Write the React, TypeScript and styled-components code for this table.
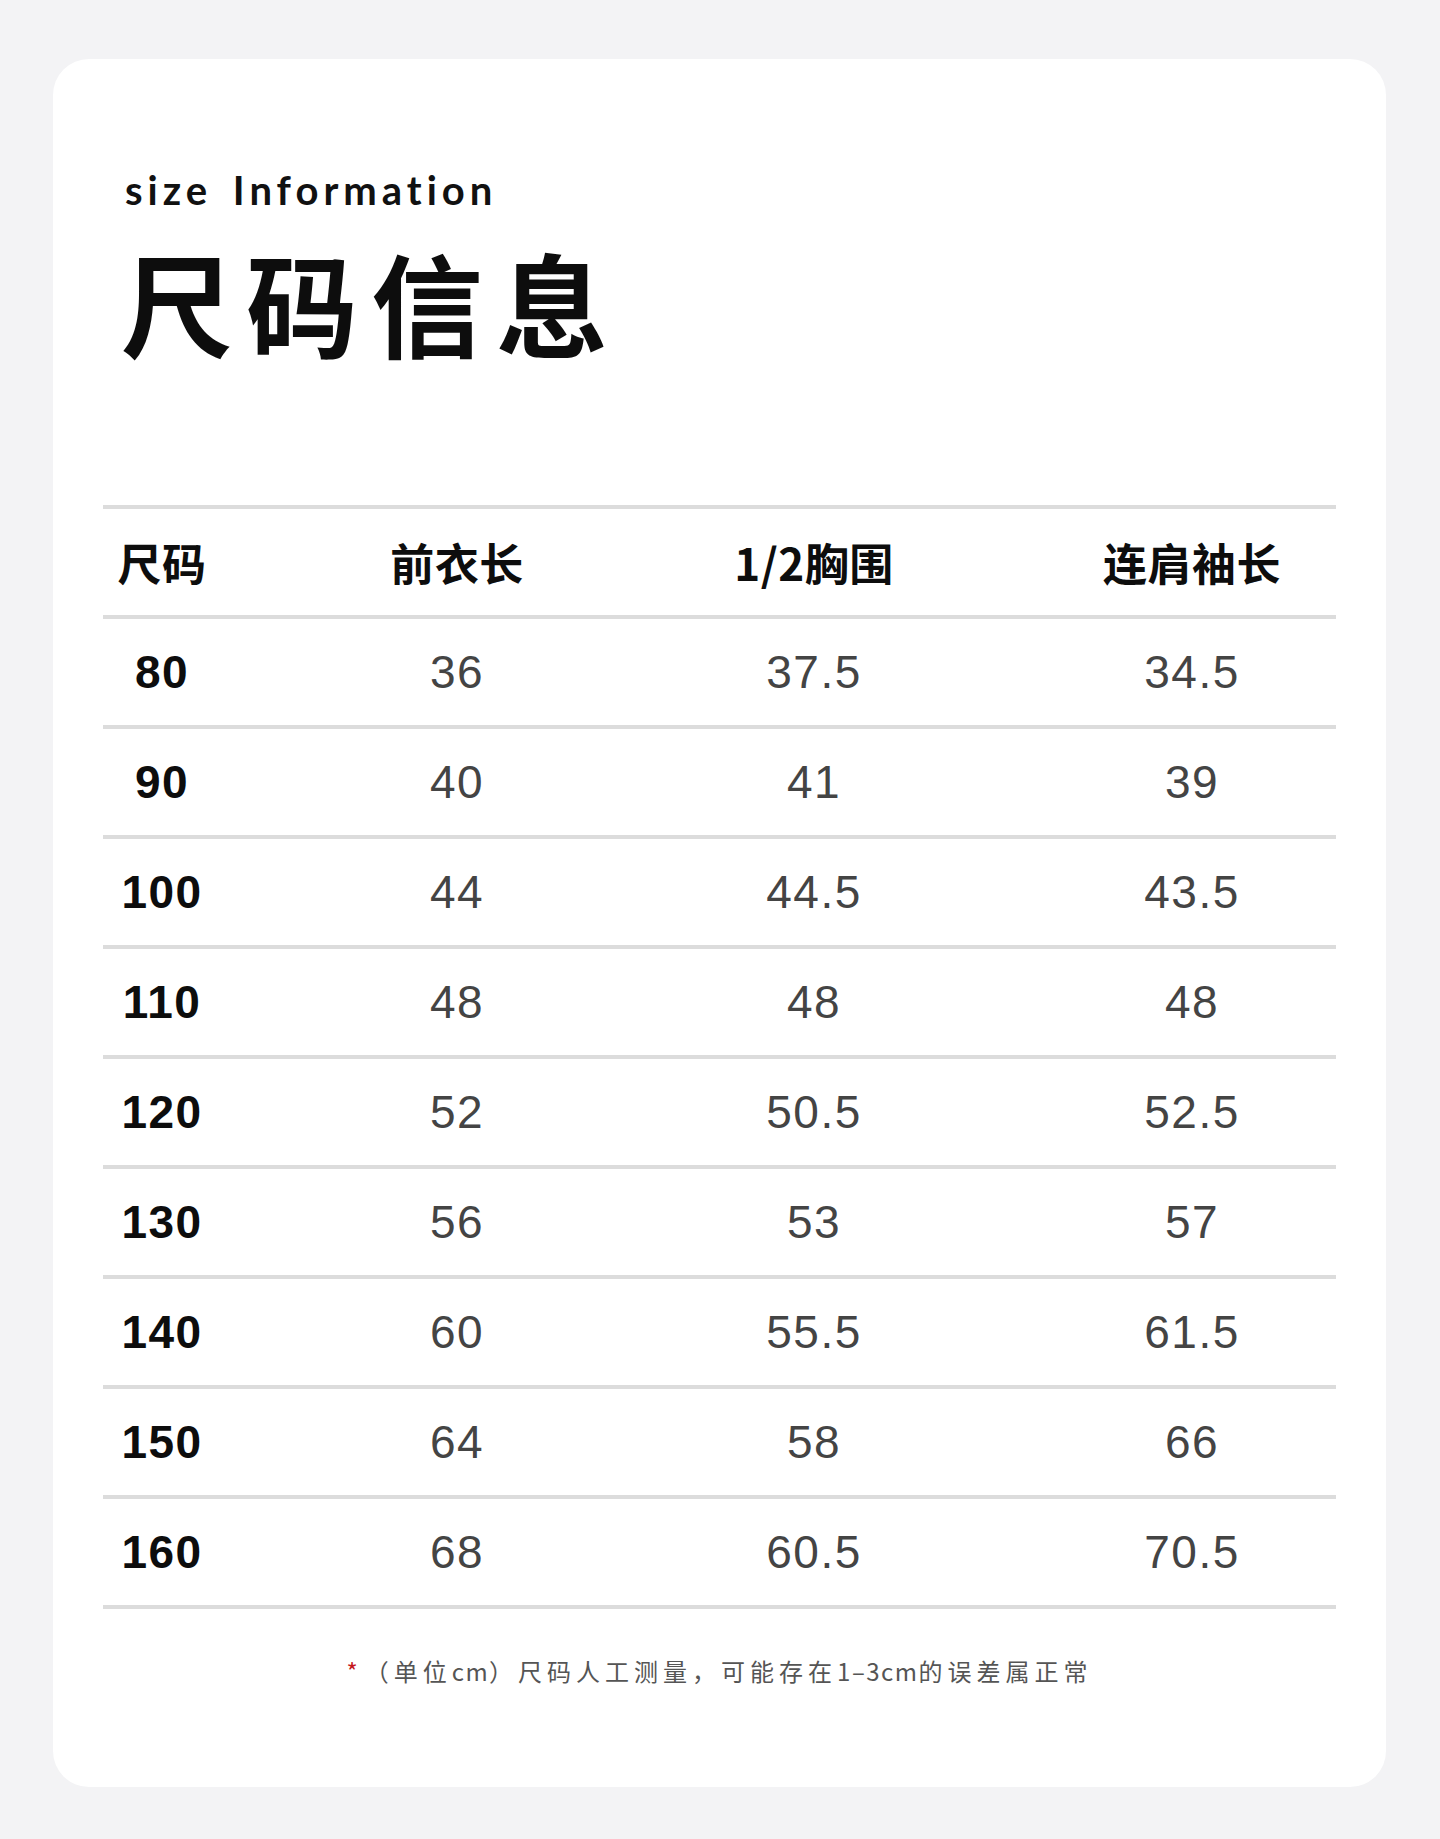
import React from 'react'
import styled, { createGlobalStyle } from 'styled-components'

const GlobalStyle = createGlobalStyle`
    html, body {
        margin: 0;
        padding: 0;
        background: #f3f3f5;
    }
`

const Page = styled.div`
    width: 1440px;
    height: 1839px;
    box-sizing: border-box;
    padding: 59px 54px 52px 53px;
    background: #f3f3f5;
`

const Card = styled.div`
    height: 1728px;
    box-sizing: border-box;
    background: #ffffff;
    border-radius: 36px;
    padding: 111px 50px 0 50px;
    display: flex;
    flex-direction: column;
`

const Heading = styled.div`
    padding-left: 22px;
    display: flex;
    flex-direction: column;

    .subtitle {
        margin: 0;
        font-family: 'Lato', 'Open Sans', sans-serif;
        font-size: 40px;
        font-weight: 700;
        line-height: 1;
        letter-spacing: 5px;
        word-spacing: 6px;
        color: #111;
    }

    .title {
        margin: 35px 0 0 -4px;
        font-family: 'Noto Sans CJK SC', sans-serif;
        font-size: 112px;
        font-weight: 700;
        line-height: 1;
        letter-spacing: 13px;
        color: #0d0d0d;
    }
`

const Table = styled.div`
    margin-top: 148px;
    border-top: 4px solid #dcdcdc;
`

const Row = styled.div`
    display: grid;
    grid-template-columns: 118px 472px 242px 401px;
    align-items: center;
    height: 106px;
    border-bottom: 4px solid #dcdcdc;
`

const Cell = styled.div<{ $head?: boolean; $size?: boolean; $last?: boolean }>`
    text-align: center;
    padding-left: ${({ $last }) => ($last ? '113px' : '0')};
    white-space: nowrap;
    line-height: 1;
    font-family: ${({ $head }) =>
        $head ? "'Noto Sans CJK SC', sans-serif" : "'Liberation Sans', Arial, sans-serif"};
    font-size: ${({ $head }) => ($head ? '44px' : '46px')};
    font-weight: ${({ $head, $size }) => ($head || $size ? 700 : 400)};
    letter-spacing: ${({ $head }) => ($head ? '0.5px' : '1.5px')};
    color: ${({ $head, $size }) => ($head || $size ? '#0d0d0d' : '#444444')};
`

const Note = styled.p`
    margin: 50px 0 0 0;
    text-align: center;
    font-family: 'Noto Sans CJK SC', sans-serif;
    font-size: 24px;
    line-height: 1;
    letter-spacing: 5px;
    color: #555;

    .star {
        color: #c4161c;
        margin-right: 2px;
    }

    .latin {
        letter-spacing: 1.5px;
    }
`

const headers = ['尺码', '前衣长', '1/2胸围', '连肩袖长']

const rows = [
    ['80', '36', '37.5', '34.5'],
    ['90', '40', '41', '39'],
    ['100', '44', '44.5', '43.5'],
    ['110', '48', '48', '48'],
    ['120', '52', '50.5', '52.5'],
    ['130', '56', '53', '57'],
    ['140', '60', '55.5', '61.5'],
    ['150', '64', '58', '66'],
    ['160', '68', '60.5', '70.5']
]

const App = () => {
    return (
        <>
            <GlobalStyle />
            <Page>
                <Card>
                    <Heading>
                        <p className='subtitle'>size Information</p>
                        <p className='title'>尺码信息</p>
                    </Heading>
                    <Table>
                        <Row>
                            {headers.map((h, i) => (
                                <Cell key={h} $head $last={i === 3}>
                                    {h}
                                </Cell>
                            ))}
                        </Row>
                        {rows.map((r) => (
                            <Row key={r[0]}>
                                {r.map((v, i) => (
                                    <Cell key={i} $size={i === 0} $last={i === 3}>
                                        {v}
                                    </Cell>
                                ))}
                            </Row>
                        ))}
                    </Table>
                    <Note>
                        <span className='star'>*</span>（单位<span className='latin'>cm</span>）尺码人工测量，可能存在<span className='latin'>1–3cm</span>的误差属正常
                    </Note>
                </Card>
            </Page>
        </>
    )
}

export default App
